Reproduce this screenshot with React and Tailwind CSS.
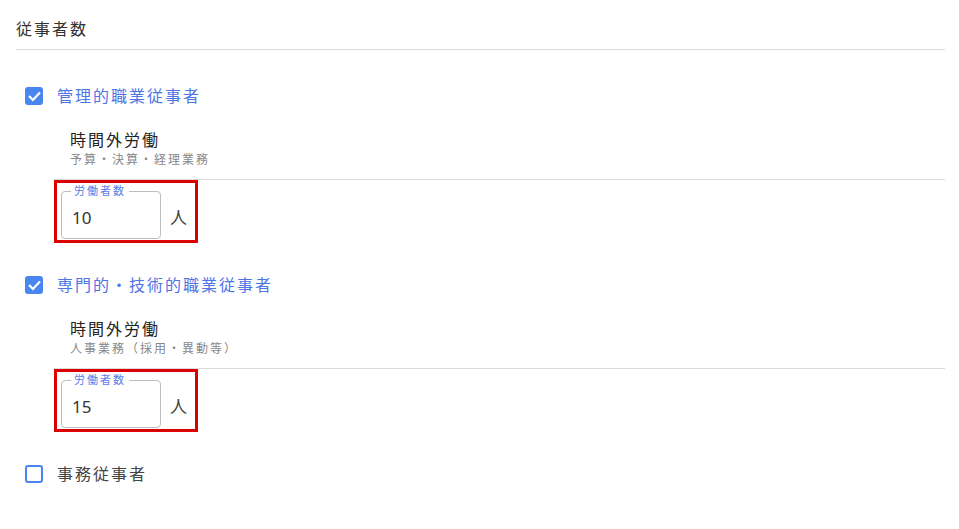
import React from 'react';

const FONT = '"Noto Sans", "Noto Sans CJK JP", sans-serif';

const sections = [
  { label: '管理的職業従事者', checked: true, sub: '予算・決算・経理業務', value: '10' },
  { label: '専門的・技術的職業従事者', checked: true, sub: '人事業務（採用・異動等）', value: '15' },
  { label: '事務従事者', checked: false },
];

function Check({ checked }) {
  if (!checked) {
    return <span className="block w-[18px] h-[18px] rounded-[3px] border-2 border-[#4a86f0] bg-white" />;
  }
  return (
    <span className="flex items-center justify-center w-[18px] h-[18px] rounded-[3px] bg-[#4a86f0]">
      <svg width="15" height="15" viewBox="0 0 24 24" fill="none" stroke="#fff" strokeWidth="3.6" strokeLinecap="square">
        <path d="M4.5 12.5l5 5 10-10.5" />
      </svg>
    </span>
  );
}

function Section({ item, first }) {
  return (
    <div className={first ? 'mt-[34px]' : 'mt-[30px]'}>
      {/* チェックボックス行 */}
      <div className="flex items-center h-[24px] pl-[9px] gap-[14px]">
        <Check checked={item.checked} />
        <span className={`text-[16px] leading-[24px] tracking-[2px] ${item.checked ? 'text-[#4f74e6]' : 'text-[#444]'}`}>
          {item.label}
        </span>
      </div>

      {item.checked && (
        <div className="ml-[38px] mt-[20px]">
          <div className="pl-[16px] pb-[11px] border-b border-[#dcdcdc]">
            <div className="text-[16px] leading-[24px] tracking-[2px] text-[#222]">時間外労働</div>
            <div className="text-[12px] leading-[16px] tracking-[2px] text-[#888]">{item.sub}</div>
          </div>

          {/* 入力欄 */}
          <div className="inline-flex items-start border-[3px] border-[#dd0000] pl-[4px] pt-[2px] pb-[1px] pr-[8px]">
            <fieldset className="w-[100px] border border-[#bdbdbd] rounded-[4px] pl-[9px] pr-[4px]">
              <legend className="px-[3px] text-[11px] leading-[12px] tracking-[2px] text-[#5a7de8]">労働者数</legend>
              <div className="pl-[1px] text-[17px] leading-[41px] text-[#333]">{item.value}</div>
            </fieldset>
            <span className="ml-[9px] mt-[12px] text-[17px] leading-[41px] text-[#444]">人</span>
          </div>
        </div>
      )}
    </div>
  );
}

export default function App() {
  return (
    <div className="min-h-screen bg-white pl-4 pr-[14px]" style={{ fontFamily: FONT }}>
      <div className="pt-[17px] pb-[8px] border-b border-[#dcdcdc] text-[16px] leading-[24px] tracking-[2px] text-[#333]">
        従事者数
      </div>
      {sections.map((s, i) => (
        <Section key={i} item={s} first={i === 0} />
      ))}
    </div>
  );
}
